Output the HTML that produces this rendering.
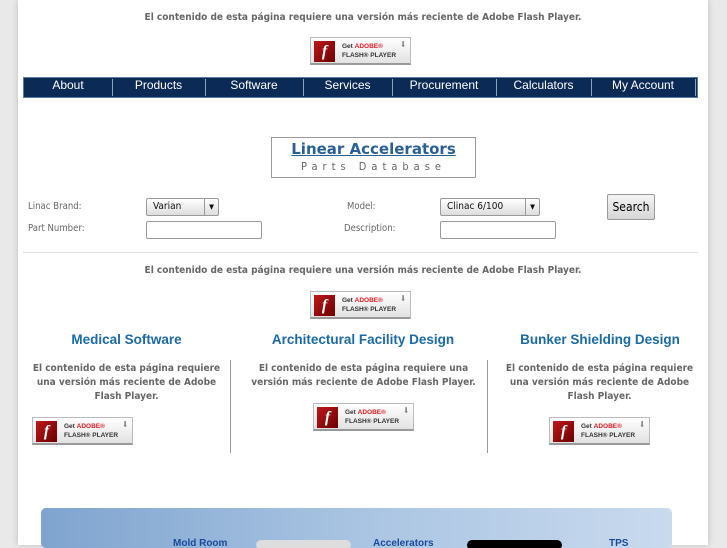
<!DOCTYPE html>
<html><head><meta charset="utf-8"><style>
*{margin:0;padding:0;box-sizing:border-box}
body{width:727px;height:545px;overflow:hidden;background:#e9e9e9;font-family:"DejaVu Sans Condensed","DejaVu Sans","Liberation Sans",sans-serif;font-stretch:condensed;position:relative}
.page{position:absolute;left:18px;top:0;width:690px;height:545px;background:#fff;box-shadow:0 0 6px #bbb}
.a{position:absolute}
.fmsg{font-size:10px;font-weight:bold;color:#666;text-align:center;line-height:14px}
.badge{position:absolute;width:101px;height:28px;background:linear-gradient(#fff,#e2e2e2);border:1px solid #bbb;border-bottom:2px solid #999}
.badge .f{position:absolute;left:3px;top:3px;width:21px;height:21px;background:linear-gradient(135deg,#c0181a,#6b0000);color:#fff;font:italic bold 16px "Liberation Serif",serif;text-align:center;line-height:21px}
.badge .t{position:absolute;left:31px;top:4px;font-size:6.5px;font-weight:bold;color:#333;line-height:9px;font-family:"Liberation Sans",sans-serif}
.badge .t b{color:#e31b23}
.badge .d{position:absolute;right:4px;top:2px;font-size:8px;color:#888}
.nav{position:absolute;left:23px;top:77px;width:675px;height:21px;background:#0b2a55;border:1px solid #5a7aa8}
.nav span{position:absolute;top:0;height:19px;line-height:21px;color:#fff;font:12px "Liberation Sans",sans-serif;text-align:center}
.sep{position:absolute;top:1px;width:1px;height:17px;background:#8ca0be}
.lbl{font-size:9.5px;color:#666}
.sel{position:absolute;height:18px;border:1px solid #999;border-radius:2px;background:linear-gradient(#fff,#ddd);font-size:10px;line-height:16px;padding-left:6px;color:#111}
.sel i{position:absolute;right:0;top:0;width:14px;height:16px;border-left:1px solid #999;font-style:normal;font-size:7px;text-align:center;line-height:16px}
.inp{position:absolute;height:18px;border:1px solid #999;border-radius:2px;background:#fff}
h3{position:absolute;font:bold 13.5px "Liberation Sans",sans-serif;color:#1a6aa5;text-align:center}
</style></head><body>
<div class="page"></div>
<div class="a fmsg" style="left:18px;top:11px;width:690px">El contenido de esta página requiere una versión más reciente de Adobe Flash Player.</div>
<div class="badge" style="left:310px;top:37px"><div class="f">f</div><div class="t">Get <b>ADOBE®</b><br>FLASH® PLAYER</div><div class="d">⬇</div></div>
<div class="nav">
<span style="left:0;width:88px">About</span><div class="sep" style="left:88px"></div>
<span style="left:88px;width:93px">Products</span><div class="sep" style="left:181px"></div>
<span style="left:181px;width:98px">Software</span><div class="sep" style="left:279px"></div>
<span style="left:279px;width:89px">Services</span><div class="sep" style="left:368px"></div>
<span style="left:368px;width:104px">Procurement</span><div class="sep" style="left:472px"></div>
<span style="left:472px;width:95px">Calculators</span><div class="sep" style="left:567px"></div>
<span style="left:567px;width:104px">My Account</span><div class="sep" style="left:671px"></div>
</div>
<div class="a" style="left:271px;top:137px;width:205px;height:41px;border:1px solid #999;text-align:center">
<div style="font:bold 15px 'DejaVu Sans',sans-serif;color:#2a5f95;text-decoration:underline;margin-top:2px">Linear Accelerators</div>
<div style="font-size:11px;color:#666;letter-spacing:5px;margin-top:2px">Parts Database</div></div>
<div class="a lbl" style="left:28px;top:201px">Linac Brand:</div>
<div class="a lbl" style="left:28px;top:223px">Part Number:</div>
<div class="a lbl" style="left:347px;top:201px">Model:</div>
<div class="a lbl" style="left:344px;top:223px">Description:</div>
<div class="sel" style="left:146px;top:198px;width:73px">Varian<i>▼</i></div>
<div class="sel" style="left:440px;top:198px;width:100px">Clinac 6/100<i>▼</i></div>
<div class="inp" style="left:146px;top:221px;width:116px"></div>
<div class="inp" style="left:440px;top:221px;width:116px"></div>
<div class="a" style="left:607px;top:194px;width:48px;height:26px;border:1px solid #999;border-radius:2px;background:linear-gradient(#f4f4f4,#d6d6d6);font:12px 'DejaVu Sans Condensed','DejaVu Sans',sans-serif;text-align:center;line-height:24px">Search</div>
<div class="a" style="left:23px;top:252px;width:675px;height:1px;background:#ddd"></div>
<div class="a fmsg" style="left:18px;top:264px;width:690px">El contenido de esta página requiere una versión más reciente de Adobe Flash Player.</div>
<div class="badge" style="left:310px;top:291px"><div class="f">f</div><div class="t">Get <b>ADOBE®</b><br>FLASH® PLAYER</div><div class="d">⬇</div></div>
<h3 style="left:30px;top:332px;width:193px">Medical Software</h3>
<h3 style="left:243px;top:332px;width:240px">Architectural Facility Design</h3>
<h3 style="left:505px;top:332px;width:190px">Bunker Shielding Design</h3>
<div class="a" style="left:230px;top:360px;width:1px;height:93px;background:#999"></div>
<div class="a" style="left:487px;top:360px;width:1px;height:93px;background:#999"></div>
<div class="a fmsg" style="left:28px;top:362px;width:197px">El contenido de esta página requiere una versión más reciente de Adobe Flash Player.</div>
<div class="a fmsg" style="left:246px;top:362px;width:235px">El contenido de esta página requiere una versión más reciente de Adobe Flash Player.</div>
<div class="a fmsg" style="left:502px;top:362px;width:195px">El contenido de esta página requiere una versión más reciente de Adobe Flash Player.</div>
<div class="badge" style="left:32px;top:417px"><div class="f">f</div><div class="t">Get <b>ADOBE®</b><br>FLASH® PLAYER</div><div class="d">⬇</div></div>
<div class="badge" style="left:313px;top:403px"><div class="f">f</div><div class="t">Get <b>ADOBE®</b><br>FLASH® PLAYER</div><div class="d">⬇</div></div>
<div class="badge" style="left:549px;top:417px"><div class="f">f</div><div class="t">Get <b>ADOBE®</b><br>FLASH® PLAYER</div><div class="d">⬇</div></div>
<div class="a" style="left:41px;top:508px;width:631px;height:40px;border-radius:5px;background:linear-gradient(90deg,#7fa4cf,#a9c4e2 50%,#c9daee);overflow:hidden">
<div class="a" style="left:132px;top:30px;font:bold 10px 'Liberation Sans';color:#1a4a9a">Mold Room</div>
<div class="a" style="left:215px;top:32px;width:95px;height:10px;background:#ddd;border-radius:6px"></div>
<div class="a" style="left:332px;top:30px;font:bold 10px 'Liberation Sans';color:#1a4a9a">Accelerators</div>
<div class="a" style="left:426px;top:32px;width:95px;height:10px;background:#000;border-radius:5px"></div>
<div class="a" style="left:568px;top:30px;font:bold 10px 'Liberation Sans';color:#1a4a9a">TPS</div>
</div>
</body></html>
